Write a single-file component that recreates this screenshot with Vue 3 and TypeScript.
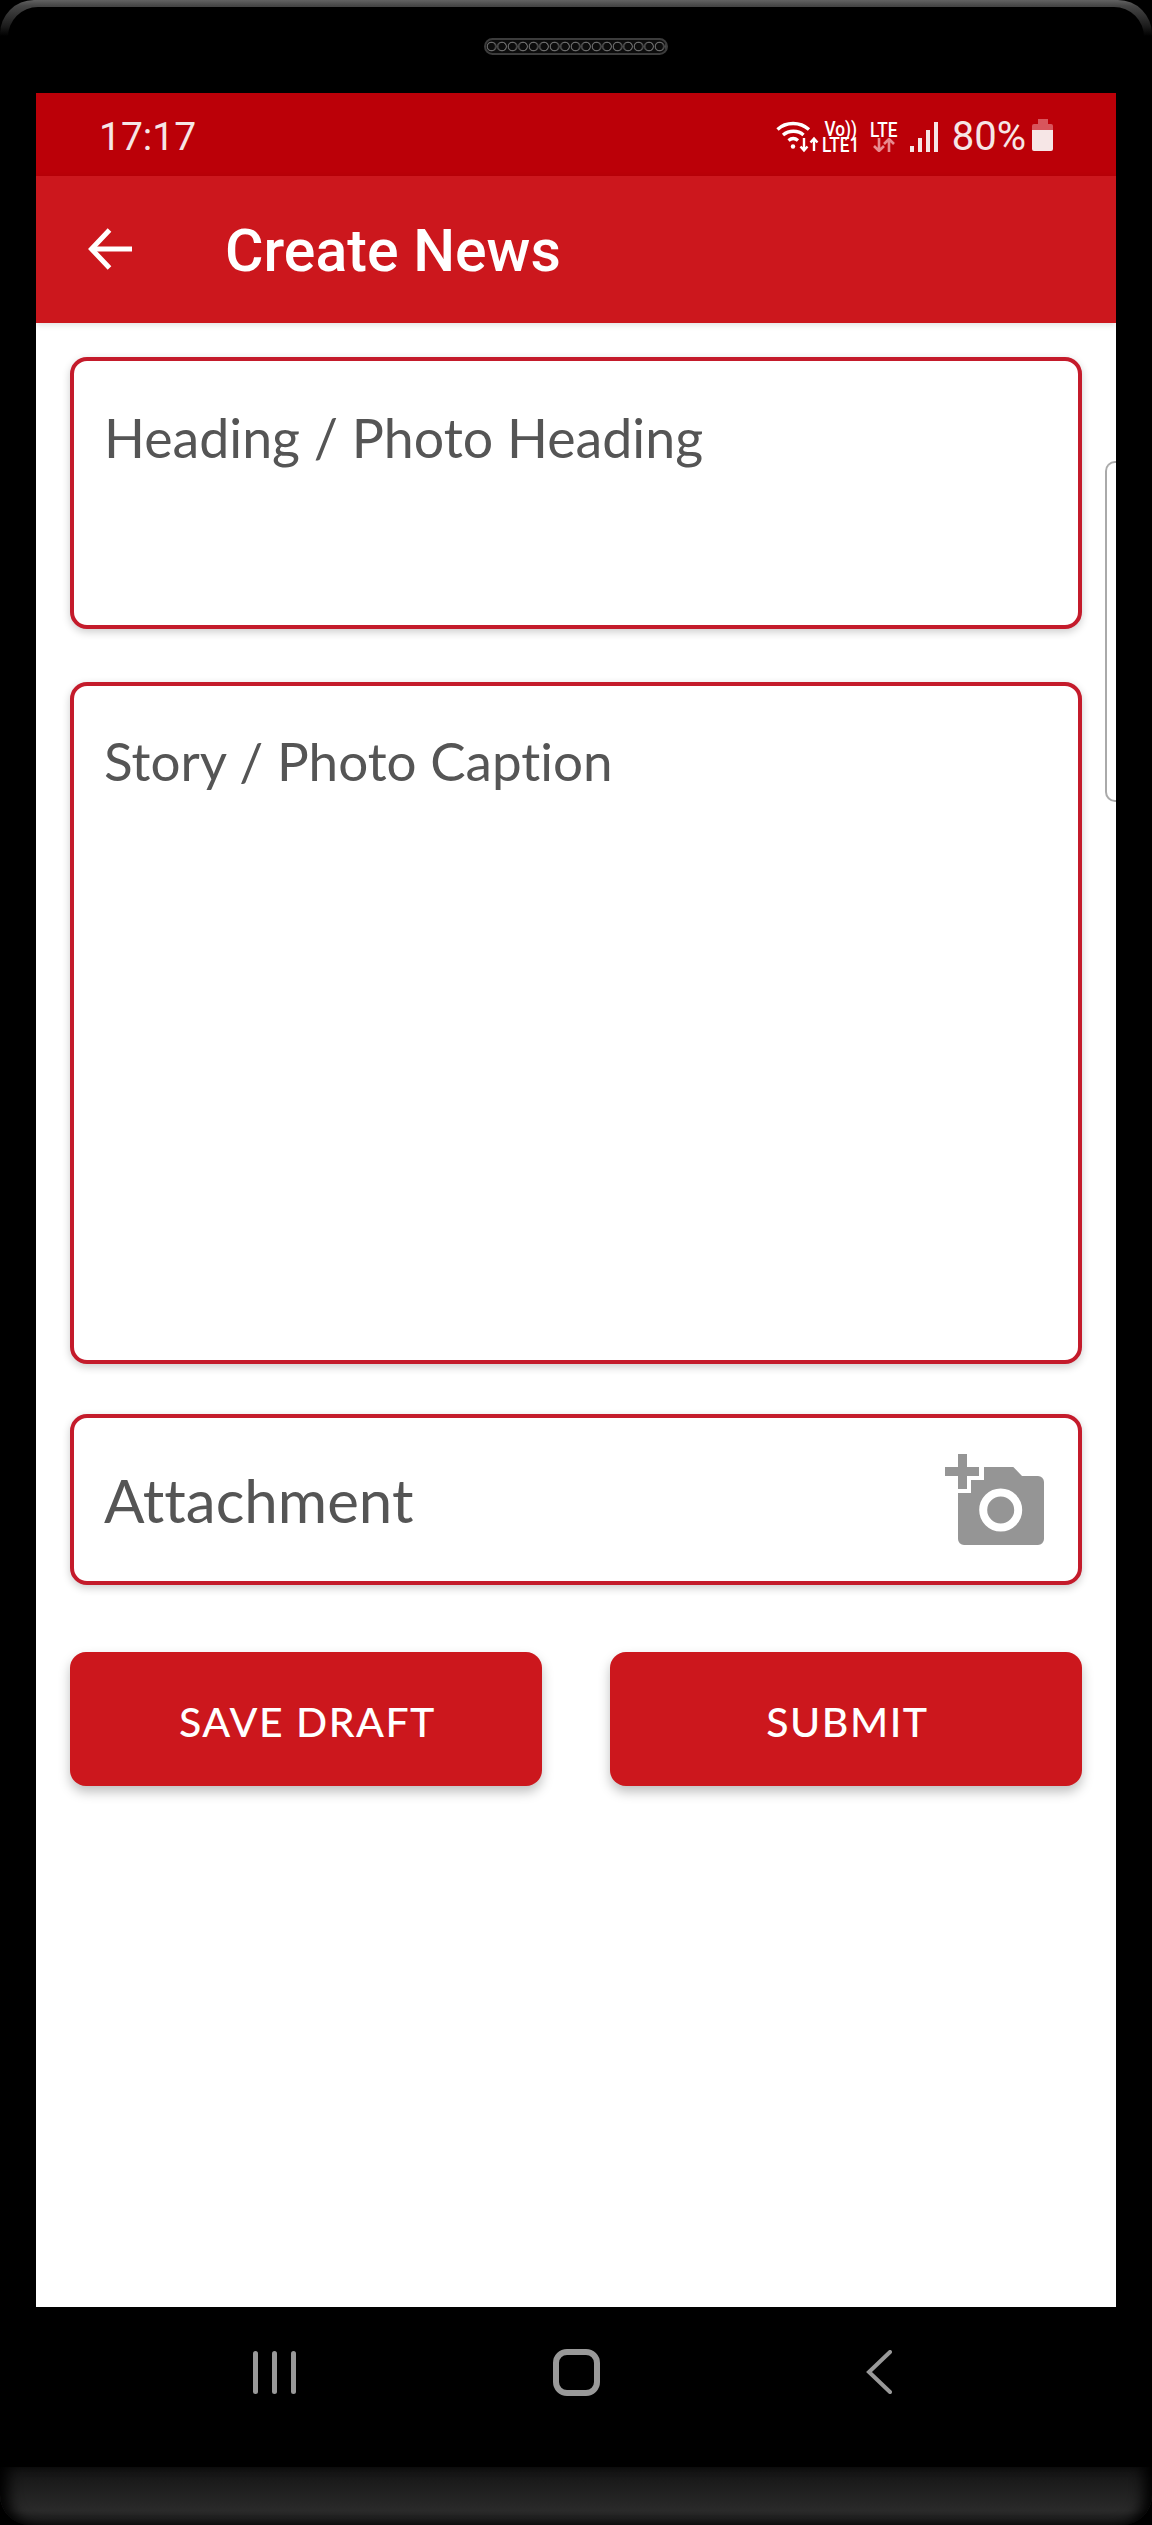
<script setup lang="ts">
const fields = [
  { label: 'Heading / Photo Heading', cls: 'heading' },
  { label: 'Story / Photo Caption', cls: 'story' },
]
const buttons = ['Save Draft', 'Submit']
</script>

<template>
  <div class="phone">
    <div class="bezel-top">
      <div class="speaker"></div>
    </div>

    <div class="screen">
      <div class="status">
        <span class="time">17:17</span>
        <div class="status-icons">
          <svg class="wifi" width="44" height="32" viewBox="0 0 44 32" fill="none" stroke="#fff" stroke-width="3.4">
            <path d="M1.5 8.5C10 .5 24 .5 33 8.5" />
            <path d="M7 14c6-5 15-5 20.500 0" />
            <path d="M12.500 19.500c3-2.500 6.500-2.500 9.500 0" />
            <circle cx="17" cy="25.500" r="2.200" fill="#fff" stroke="none" />
            <path d="M28 17v12M24.500 25.500l3.500 4 3.500-4" stroke-width="2.400" />
            <path d="M38 30V18M34.500 21.500l3.500-4 3.500 4" stroke-width="2.400" />
          </svg>
          <div class="net">
            <span class="tiny">Vo))</span>
            <span class="tiny">LTE1</span>
          </div>
          <div class="net lte">
            <span class="tiny">LTE</span>
            <svg width="24" height="14" viewBox="0 0 24 14" fill="none" stroke="#e88a8f" stroke-width="2.600">
              <path d="M7 0v13M2 8l5 5 5-5" />
              <path d="M17 14V1M12 6l5-5 5 5" />
            </svg>
          </div>
          <div class="signal">
            <i style="height: 6px"></i>
            <i style="height: 14px"></i>
            <i style="height: 22px"></i>
            <i style="height: 30px"></i>
          </div>
          <span class="pct">80%</span>
          <div class="battery"></div>
        </div>
      </div>

      <div class="appbar">
        <svg class="back" width="44" height="42" viewBox="0 0 44 42" fill="none" stroke="#fff" stroke-width="5">
          <path d="M44 21H4" />
          <path d="M21.500 2 3.500 21l18 19" />
        </svg>
        <span class="title">Create News</span>
      </div>

      <div class="content">
        <div class="edge"></div>

        <div v-for="field in fields" :key="field.cls" class="field" :class="field.cls">{{ field.label }}</div>

        <div class="field attach">
          <span>Attachment</span>
          <svg width="99" height="91" viewBox="0 0 99 91" fill="#959595">
            <path d="M13 13V0h9v13h12v9H22v13h-9V22H0v-9z" />
            <path d="M39 13h29.300L77 22h16a6 6 0 0 1 6 6v57a6 6 0 0 1-6 6H19a6 6 0 0 1-6-6V39h13V26h13z" />
            <circle cx="55.700" cy="56" r="17.500" stroke="#fff" stroke-width="8" />
          </svg>
        </div>

        <div class="actions">
          <button v-for="b in buttons" :key="b" type="button">{{ b }}</button>
        </div>
      </div>
    </div>

    <div class="nav">
      <div class="recents"><i></i><i></i><i></i></div>
      <div class="home"></div>
      <svg class="nav-back" width="26" height="44" viewBox="0 0 26 44" fill="none" stroke="#999" stroke-width="4" stroke-linecap="round">
        <path d="M24 2 3 22l21 20" />
      </svg>
    </div>

    <div class="chin"></div>
  </div>
</template>

<style>
html, body { margin: 0; background: #000; }
</style>

<style scoped>
.phone {
  width: 1152px;
  height: 2525px;
  display: flex;
  flex-direction: column;
  background: #000;
  overflow: hidden;
  font-family: Roboto, sans-serif;
}

.bezel-top {
  position: relative;
  height: 93px;
  flex: none;
  display: flex;
  justify-content: center;
  padding-top: 38px;
  box-sizing: border-box;
  border-radius: 34px 34px 0 0;
  background: linear-gradient(#626262 0, #454545 6px, #1c1c1c 26px, #000 36px);
}

.bezel-top::before {
  content: '';
  position: absolute;
  inset: 7px 8px 0;
  border-radius: 30px 30px 0 0;
  background: #000;
}

.speaker {
  position: relative;
  width: 184px;
  height: 17px;
  box-sizing: border-box;
  border: 2px solid #3c3c3c;
  border-radius: 9px;
  background: radial-gradient(circle at 5.500px 6.500px, transparent 3.500px, #6a6a6a 4px, #6a6a6a 4.500px, transparent 5.200px) 0 0 / 10.500px 13px repeat-x #0c0c0c;
}

.screen {
  flex: 1;
  margin: 0 36px;
  display: flex;
  flex-direction: column;
  background: #fff;
}

.status {
  height: 83px;
  flex: none;
  background: #bb0008;
  display: flex;
  align-items: center;
  justify-content: space-between;
  padding: 4px 63px 0;
  box-sizing: border-box;
  color: #fff;
}

.time {
  font-size: 39px;
  color: #f6e6e6;
}

.status-icons {
  display: flex;
  align-items: center;
  height: 34px;
}

.wifi { margin-right: 1px; }

.net {
  display: flex;
  flex-direction: column;
  align-items: center;
  width: 40px;
}

.lte {
  width: 32px;
  margin: 0 10px 0 7px;
}

.tiny {
  font-size: 21px;
  font-weight: 500;
  line-height: 16px;
  transform: scaleX(0.82);
}

.signal {
  display: flex;
  align-items: flex-end;
  gap: 4px;
  height: 30px;
  margin-right: 14px;
}

.signal i {
  width: 4px;
  background: #f6e6e6;
}

.pct {
  font-size: 40px;
  color: #f6e6e6;
  margin-right: 6px;
  line-height: 34px;
}

.battery {
  position: relative;
  width: 21px;
  height: 27px;
  margin-top: 2px;
  border-radius: 2px;
  background: linear-gradient(#d8555c 0 6px, #f6e6e6 6px);
}

.battery::before {
  content: '';
  position: absolute;
  left: 6px;
  top: -5px;
  width: 10px;
  height: 5px;
  background: #d8555c;
}

.appbar {
  height: 147px;
  flex: none;
  background: #cc171d;
  display: flex;
  align-items: center;
  color: #fff;
  padding: 0 0 0 52px;
  box-sizing: border-box;
  box-shadow: 0 2px 6px rgba(0, 0, 0, 0.12);
  position: relative;
}

.back {
  flex: none;
  margin-bottom: 2px;
}

.title {
  margin-left: 93px;
  margin-top: 2px;
  font-size: 59px;
  font-weight: 500;
}

.content {
  position: relative;
  flex: 1;
  padding: 34px 34px 0;
  box-sizing: border-box;
  display: flex;
  flex-direction: column;
}

.edge {
  position: absolute;
  right: 0;
  top: 138px;
  width: 11px;
  height: 341px;
  box-sizing: border-box;
  border: 2px solid #aaa;
  border-right: 0;
  border-radius: 10px 0 0 10px;
}

.field {
  box-sizing: border-box;
  border: 4px solid #c41b2b;
  border-radius: 17px;
  background: #fff;
  box-shadow: 0 3px 9px rgba(0, 0, 0, 0.2);
  color: #555;
  font-family: Lato, sans-serif;
  font-variant-ligatures: none;
  font-size: 53.700px;
  line-height: 64px;
  padding: 44px 30px 0;
}

.heading {
  height: 272px;
  margin-bottom: 53px;
}

.story {
  height: 682px;
  margin-bottom: 50px;
  padding-top: 43px;
  font-size: 53px;
}

.attach {
  height: 171px;
  margin-bottom: 67px;
  padding: 0 34px 0 30px;
  display: flex;
  align-items: center;
  justify-content: space-between;
  font-size: 60px;
}

.actions {
  display: flex;
  justify-content: space-between;
}

button {
  width: 472px;
  height: 134px;
  padding: 4px 0 0 3px;
  border: 0;
  border-radius: 16px;
  background: #cc171d;
  color: #fff;
  font-family: Lato, sans-serif;
  font-size: 41px;
  font-weight: 500;
  letter-spacing: 1.500px;
  text-transform: uppercase;
  box-shadow: 0 6px 12px rgba(0, 0, 0, 0.25);
}

.nav {
  height: 160px;
  flex: none;
  display: flex;
  align-items: center;
  padding: 0 0 30px 253px;
  box-sizing: border-box;
}

.recents {
  display: flex;
  gap: 14px;
  height: 43px;
}

.recents i {
  width: 5px;
  border-radius: 3px;
  background: #999;
}

.home {
  width: 47px;
  height: 47px;
  box-sizing: border-box;
  margin-left: 257px;
  border: 6px solid #999;
  border-radius: 14px;
}

.nav-back {
  margin-left: 266px;
}

.chin {
  height: 58px;
  flex: none;
  background: linear-gradient(#131313, #2a2a2a 75%, #161616);
  border-radius: 0 0 30px 30px;
  box-shadow: inset 14px 0 14px -6px #000, inset -14px 0 14px -6px #000;
}
</style>
